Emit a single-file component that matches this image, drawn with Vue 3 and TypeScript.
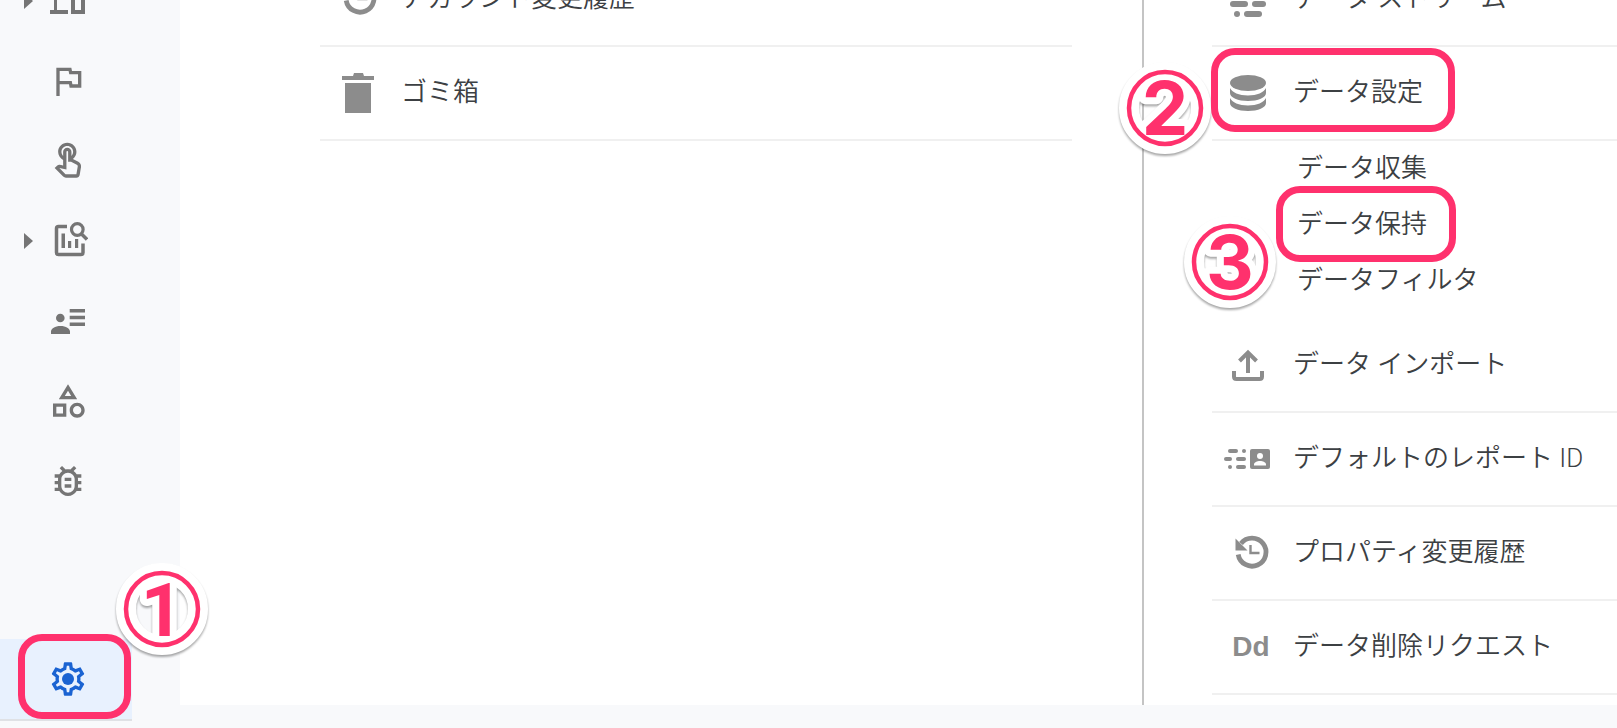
<script setup lang="ts">
interface NavItem {
  id: string
  label: string
  expandable?: boolean
}

interface MenuItem {
  icon: string
  label: string
  step?: number
  children?: { label: string; step?: number }[]
}

const navItems: NavItem[] = [
  { id: 'devices', label: 'レポート', expandable: true },
  { id: 'flag', label: 'コンバージョン' },
  { id: 'touch', label: 'イベント' },
  { id: 'explore', label: '探索', expandable: true },
  { id: 'audience', label: 'オーディエンス' },
  { id: 'category', label: 'カスタム定義' },
  { id: 'bug', label: 'DebugView' },
]

const accountItems: MenuItem[] = [
  { icon: 'history', label: 'アカウント変更履歴' },
  { icon: 'trash', label: 'ゴミ箱' },
]

const propertyItems: MenuItem[] = [
  { icon: 'stream', label: 'データ ストリーム' },
  {
    icon: 'database',
    label: 'データ設定',
    step: 2,
    children: [
      { label: 'データ収集' },
      { label: 'データ保持', step: 3 },
      { label: 'データフィルタ' },
    ],
  },
  { icon: 'upload', label: 'データ インポート' },
  { icon: 'identity', label: 'デフォルトのレポート ID' },
  { icon: 'history', label: 'プロパティ変更履歴' },
  { icon: 'dd', label: 'データ削除リクエスト' },
]

const columns = [
  { name: 'account', items: accountItems },
  { name: 'property', items: propertyItems },
]
</script>

<template>
  <div class="page">
    <nav class="sidebar">
      <a v-for="item in navItems" :key="item.id" href="#" class="nav-item" :aria-label="item.label">
        <svg v-if="item.expandable" class="arrow" viewBox="0 0 9 16" aria-hidden="true"><path d="M0 0l9 8-9 8z" /></svg>
        <svg v-if="item.id === 'devices'" class="nav-icon" viewBox="0 0 40 40">
          <path d="M2 29h4V9h14v4H9v16h11v4H2zM23 13h14v20H23zm4 4v12h6V17z" fill-rule="evenodd" />
        </svg>
        <svg v-else-if="item.id === 'flag'" class="nav-icon" viewBox="0 0 24 24">
          <path d="M14.400 6L14 4H5v17h2v-7h5.600l.4 2h7V6h-5.600zm3.600 8h-3.360l-.4-2H7V6h5.360l.4 2H18v6z" />
        </svg>
        <svg v-else-if="item.id === 'touch'" class="nav-icon" viewBox="0 0 24 24">
          <path d="M18.190 12.440l-3.240-1.620c1.290-1 2.120-2.560 2.120-4.320 0-3.030-2.470-5.500-5.500-5.500s-5.500 2.470-5.500 5.500c0 2.130 1.220 3.980 3 4.890v3.260c-2.150-.46-2.020-.44-2.260-.44-.53 0-1.030.21-1.410.59L4 16.220l5.090 5.090c.43.44 1.030.69 1.650.69h6.300c.98 0 1.810-.7 1.970-1.670l.8-4.710c.22-1.300-.43-2.580-1.620-3.180zm-.35 2.850l-.8 4.710h-6.300c-.09 0-.17-.04-.24-.1l-3.680-3.680 4.250.89V6.500c0-.28.22-.5.5-.5s.5.22.5.5v6h1.760l3.460 1.730c.4.2.62.63.55 1.060zM8.070 6.500c0-1.930 1.570-3.500 3.500-3.500s3.500 1.570 3.500 3.500c0 .95-.38 1.810-1 2.440V6.500c0-1.380-1.120-2.500-2.500-2.500s-2.500 1.120-2.500 2.500v2.440c-.62-.63-1-1.490-1-2.440z" />
        </svg>
        <svg v-else-if="item.id === 'explore'" class="nav-icon" viewBox="0 0 40 40">
          <path d="M19 5.500H10.500a2 2 0 0 0-2 2v24a2 2 0 0 0 2 2h22.500a2 2 0 0 0 2-2V22.500" fill="none" stroke="currentColor" stroke-width="3.500" />
          <path d="M13.500 12.500H17V27h-3.500zM20 20h3.200v7H20zM27 18h3.200v9H27z" />
          <circle cx="29.300" cy="8.500" r="5.800" fill="none" stroke="currentColor" stroke-width="3.200" />
          <path d="M33 12.500l6 6" fill="none" stroke="currentColor" stroke-width="3.400" />
        </svg>
        <svg v-else-if="item.id === 'audience'" class="nav-icon" viewBox="0 0 40 40">
          <circle cx="12.300" cy="17" r="4.300" />
          <path d="M3 33v-2.500c0-3 4-5.500 9.500-5.500s9.500 2.500 9.500 5.500V33zM21.700 8H37v3.600H21.700zM21.700 14.800H37v3.400H21.700zM21.700 21.600H37V25H21.700z" />
        </svg>
        <svg v-else-if="item.id === 'category'" class="nav-icon" viewBox="0 0 24 24">
          <path d="M12 2l-5.500 9h11L12 2zm0 3.840L13.930 9h-3.870L12 5.840zM17.500 13c-2.490 0-4.500 2.010-4.500 4.500s2.010 4.500 4.500 4.500 4.500-2.010 4.500-4.500-2.010-4.500-4.500-4.500zm0 7c-1.380 0-2.500-1.120-2.500-2.500s1.120-2.500 2.500-2.500 2.500 1.120 2.500 2.500-1.120 2.500-2.500 2.500zM3 21.500h8v-8H3v8zm2-6h4v4H5v-4z" />
        </svg>
        <svg v-else class="nav-icon" viewBox="0 0 24 24">
          <path d="M20 8h-2.810c-.45-.78-1.070-1.450-1.820-1.960L17 4.410 15.590 3l-2.170 2.170C12.960 5.060 12.490 5 12 5s-.96.06-1.410.17L8.410 3 7 4.410l1.620 1.630C7.880 6.550 7.260 7.220 6.810 8H4v2h2.090c-.05.33-.09.66-.09 1v1H4v2h2v1c0 .34.04.67.09 1H4v2h2.810c1.040 1.790 2.970 3 5.190 3s4.150-1.210 5.190-3H20v-2h-2.090c.05-.33.09-.66.09-1v-1h2v-2h-2v-1c0-.34-.04-.67-.09-1H20V8zm-4 4v3c0 2.210-1.790 4-4 4s-4-1.790-4-4v-4c0-2.210 1.790-4 4-4s4 1.790 4 4v1zm-6 2h4v2h-4v-2zm0-4h4v2h-4v-2z" />
        </svg>
      </a>

      <div class="settings">
        <a href="#" class="nav-item active" aria-label="管理">
          <svg class="nav-icon" viewBox="0 0 24 24">
            <path d="M19.430 12.980c.04-.32.07-.64.07-.98 0-.34-.03-.66-.07-.98l2.110-1.650c.19-.15.24-.42.12-.64l-2-3.460c-.09-.16-.26-.25-.44-.25-.06 0-.12.01-.17.03l-2.490 1c-.52-.4-1.080-.73-1.690-.98l-.38-2.650C14.460 2.180 14.250 2 14 2h-4c-.25 0-.46.18-.49.42l-.38 2.650c-.61.25-1.170.59-1.690.98l-2.490-1c-.06-.02-.12-.03-.18-.03-.17 0-.34.09-.43.25l-2 3.460c-.13.22-.07.49.12.64l2.110 1.650c-.04.32-.07.65-.07.98 0 .33.03.66.07.98l-2.110 1.650c-.19.15-.24.42-.12.64l2 3.460c.09.16.26.25.44.25.06 0 .12-.01.17-.03l2.490-1c.52.4 1.080.73 1.690.98l.38 2.650c.03.24.24.42.49.42h4c.25 0 .46-.18.49-.42l.38-2.650c.61-.25 1.170-.59 1.690-.98l2.490 1c.06.02.12.03.18.03.17 0 .34-.09.43-.25l2-3.460c.12-.22.07-.49-.12-.64l-2.110-1.650zm-1.980-1.710c.04.31.05.52.05.73 0 .21-.02.43-.05.73l-.14 1.130.89.7 1.080.84-.7 1.210-1.270-.51-1.040-.42-.9.68c-.43.32-.84.56-1.250.73l-1.060.43-.16 1.130-.2 1.350h-1.400l-.19-1.350-.16-1.130-1.060-.43c-.43-.18-.83-.41-1.230-.71l-.91-.7-1.060.43-1.270.51-.7-1.210 1.080-.84.89-.7-.14-1.130c-.03-.31-.05-.54-.05-.74s.02-.43.05-.73l.14-1.130-.89-.7-1.080-.84.7-1.210 1.270.51 1.040.42.9-.68c.43-.32.84-.56 1.250-.73l1.060-.43.16-1.130.2-1.350h1.390l.19 1.350.16 1.130 1.060.43c.43.18.83.41 1.230.71l.91.7 1.060-.43 1.270-.51.7 1.210-1.070.85-.89.7.14 1.130z" />
            <circle cx="12" cy="12" r="3.600" />
          </svg>
        </a>
        <span class="mark mark-1"></span>
        <svg class="badge badge-1" viewBox="0 0 100 100">
          <g class="halo"><circle cx="50" cy="50" r="36" /><text x="50" y="77">1</text></g>
          <circle class="ring" cx="50" cy="50" r="36" /><text class="digit" x="50" y="77">1</text>
        </svg>
      </div>
    </nav>

    <main class="content">
      <ul v-for="col in columns" :key="col.name" class="column" :class="col.name">
        <li v-for="item in col.items" :key="item.label" class="entry">
          <a href="#" class="row">
            <svg class="row-icon" viewBox="0 0 48 48" aria-hidden="true">
              <template v-if="item.icon === 'history'">
                <path d="M17 14.500A14 14 0 1 1 14.200 25.500" fill="none" stroke="currentColor" stroke-width="4.800" />
                <path d="M11.500 9.500V21.500H23.500z" />
                <path d="M26.500 16v8h9" fill="none" stroke="currentColor" stroke-width="2.400" />
              </template>
              <path v-else-if="item.icon === 'trash'" d="M10 7h11l1-3h9l1 3h10v4H10zM13 14h26v30H13z" />
              <g v-else-if="item.icon === 'stream'">
                <rect x="10" y="6" width="18" height="6" rx="3" /><rect x="32" y="6" width="6" height="6" rx="3" />
                <rect x="6" y="16" width="6" height="6" rx="3" /><rect x="16" y="16" width="22" height="6" rx="3" />
                <rect x="6" y="26" width="18" height="6" rx="3" /><rect x="28" y="26" width="14" height="6" rx="3" />
                <rect x="10" y="36" width="6" height="6" rx="3" /><rect x="20" y="36" width="18" height="6" rx="3" />
              </g>
              <g v-else-if="item.icon === 'database'">
                <ellipse cx="24" cy="14" rx="18" ry="8" />
                <path d="M6 19c2 4.500 9 7.500 18 7.500s16-3 18-7.500v5c0 4.500-8 8-18 8s-18-3.500-18-8zM6 29c2 4.500 9 7.500 18 7.500s16-3 18-7.500v5c0 4.500-8 8-18 8s-18-3.500-18-8z" />
              </g>
              <g v-else-if="item.icon === 'upload'">
                <path d="M10 30v5.500q0 2.500 2.500 2.500h23q2.500 0 2.500-2.500V30" fill="none" stroke="currentColor" stroke-width="4" />
                <path d="M24 32V12M15.500 20L24 11.500 32.500 20" fill="none" stroke="currentColor" stroke-width="4" />
              </g>
              <g v-else-if="item.icon === 'identity'">
                <rect x="4" y="14" width="10" height="4" rx="2" /><rect x="18" y="14" width="4" height="4" rx="2" />
                <rect x="0" y="22" width="8" height="4" rx="2" /><rect x="12" y="22" width="10" height="4" rx="2" />
                <rect x="4" y="30" width="4" height="4" rx="2" /><rect x="12" y="30" width="10" height="4" rx="2" />
                <rect x="26" y="14" width="20" height="20" rx="2" />
                <circle class="cutout" cx="36" cy="21" r="3" />
                <path class="cutout" d="M30 30.500v-1c0-2 3-3.500 6-3.500s6 1.500 6 3.500v1z" />
              </g>
              <text v-else class="dd" x="27" y="33">Dd</text>
            </svg>
            <span class="label">{{ item.label }}</span>
          </a>
          <template v-if="item.step">
            <span class="mark mark-2"></span>
            <svg class="badge badge-2" viewBox="0 0 100 100">
              <g class="halo"><circle cx="50" cy="50" r="36" /><text x="50" y="77">{{ item.step }}</text></g>
              <circle class="ring" cx="50" cy="50" r="36" /><text class="digit" x="50" y="77">{{ item.step }}</text>
            </svg>
          </template>
          <ul v-if="item.children" class="sublist">
            <li v-for="child in item.children" :key="child.label" class="subitem">
              <a href="#" class="sublink">{{ child.label }}</a>
              <template v-if="child.step">
                <span class="mark mark-3"></span>
                <svg class="badge badge-3" viewBox="0 0 100 100">
                  <g class="halo"><circle cx="50" cy="50" r="36" /><text x="50" y="77">{{ child.step }}</text></g>
                  <circle class="ring" cx="50" cy="50" r="36" /><text class="digit" x="50" y="77">{{ child.step }}</text>
                </svg>
              </template>
            </li>
          </ul>
        </li>
      </ul>
    </main>
  </div>
</template>

<style>
body {
  margin: 0;
}
</style>

<style scoped>
.page {
  display: grid;
  grid-template-columns: 180px 1fr;
  align-items: start;
  min-height: 100vh;
  overflow: hidden;
  background: #f8f9fb;
  color: #3c4043;
  font-family: Roboto, "Noto Sans CJK JP", sans-serif;
  font-size: 26px;
  font-weight: 350;
  line-height: 40px;
}

a {
  color: inherit;
  text-decoration: none;
}

ul {
  margin: 0;
  padding: 0;
  list-style: none;
}

.sidebar {
  position: relative;
  z-index: 1;
  align-self: stretch;
  display: flex;
  flex-direction: column;
  margin-top: -39px;
  padding-bottom: 7px;
}

.nav-item {
  display: flex;
  align-items: center;
  justify-content: flex-end;
  gap: 15px;
  box-sizing: border-box;
  width: 132px;
  height: 80px;
  padding-right: 44px;
  color: #757575;
}

.nav-icon {
  width: 40px;
  height: 40px;
  fill: currentColor;
}

.arrow {
  width: 9px;
  height: 16px;
  fill: currentColor;
}

.settings {
  position: relative;
  width: 132px;
  margin-top: auto;
  border-bottom: 2px solid #dfe1e5;
}

.nav-item.active {
  background: #e8f1fe;
  color: #1a63d2;
}

.content {
  display: grid;
  grid-template-columns: 964fr 473fr;
  background: #fff;
}

.column {
  margin-top: -47px;
  padding-bottom: 10px;
}

.account {
  padding-left: 140px;
  padding-right: 70px;
  border-right: 2px solid #c4c4c4;
}

.property {
  padding-left: 68px;
}

.entry {
  position: relative;
}

.row {
  display: flex;
  align-items: center;
  gap: 21px;
  height: 92px;
  padding-left: 12px;
  border-bottom: 2px solid #f0f0f0;
  white-space: nowrap;
}

.row-icon {
  flex: none;
  width: 48px;
  height: 48px;
  color: #8c8c8c;
  fill: currentColor;
}

.cutout {
  fill: #fff;
}

.dd {
  font: bold 28px "Liberation Sans", Arial, sans-serif;
  text-anchor: middle;
}

.label {
  padding-bottom: 2px;
}

.sublist {
  padding-bottom: 10px;
}

.subitem {
  position: relative;
  height: 56px;
}

.sublink {
  display: block;
  padding: 7px 0 9px 85px;
}

.mark {
  position: absolute;
  z-index: 2;
  box-sizing: border-box;
  border: 7px solid #ff316d;
  border-radius: 24px;
  pointer-events: none;
}

.mark-1 {
  left: 18px;
  top: -5px;
  width: 113px;
  height: 85px;
}

.mark-2 {
  left: -1px;
  top: 1px;
  width: 244px;
  height: 84px;
}

.mark-3 {
  left: 64px;
  top: -11px;
  width: 180px;
  height: 76px;
}

.badge {
  position: absolute;
  z-index: 1;
  width: 100px;
  height: 100px;
  overflow: visible;
  font: bold 74px Inter, "Liberation Sans", sans-serif;
  text-anchor: middle;
  pointer-events: none;
}

.badge-1 {
  left: 112px;
  top: -80px;
  font-family: Roboto, sans-serif;
}

.badge-2 {
  left: -97px;
  top: 11px;
}

.badge-3 {
  left: -32px;
  top: 15px;
}

.halo {
  fill: #fff;
  stroke: #fff;
  stroke-width: 14;
  stroke-linejoin: round;
  filter: drop-shadow(0 2px 1px rgba(0, 0, 0, 0.35));
}

.halo circle {
  fill: none;
  stroke-width: 20;
}

.ring {
  fill: none;
  stroke: #ff316d;
  stroke-width: 4.5;
}

.digit {
  fill: #ff316d;
}
</style>
